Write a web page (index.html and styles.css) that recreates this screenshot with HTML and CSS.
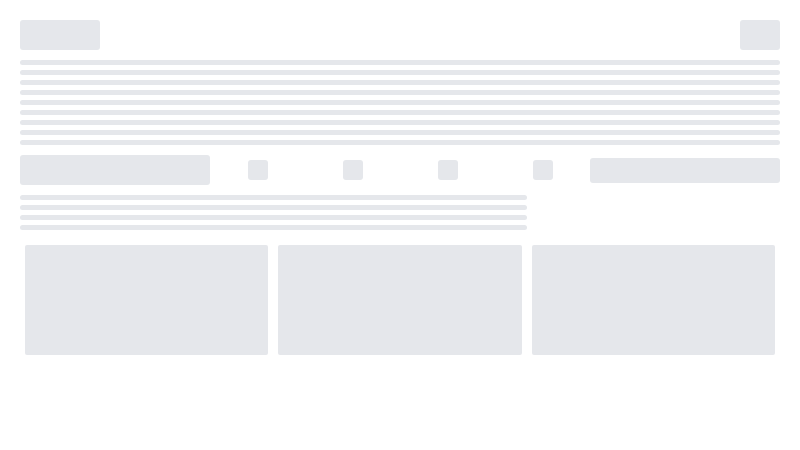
FILE: index.html
```html
<!DOCTYPE html>
<html lang="en">
<head>
<meta charset="utf-8">
<title>Loading</title>
<link rel="stylesheet" href="styles.css">
</head>
<body>
<div class="page">
  <div class="header">
    <div class="sk logo"></div>
    <div class="sk action"></div>
  </div>
  <div class="lines">
    <div class="sk line"></div>
    <div class="sk line"></div>
    <div class="sk line"></div>
    <div class="sk line"></div>
    <div class="sk line"></div>
    <div class="sk line"></div>
    <div class="sk line"></div>
    <div class="sk line"></div>
    <div class="sk line"></div>
  </div>
  <div class="toolbar">
    <div class="sk search"></div>
    <div class="icons">
      <div class="cell"><div class="sk icon"></div></div>
      <div class="cell"><div class="sk icon"></div></div>
      <div class="cell"><div class="sk icon"></div></div>
      <div class="cell"><div class="sk icon"></div></div>
    </div>
    <div class="sk field"></div>
  </div>
  <div class="lines short">
    <div class="sk line"></div>
    <div class="sk line"></div>
    <div class="sk line"></div>
    <div class="sk line"></div>
  </div>
  <div class="cards">
    <div class="sk card"></div>
    <div class="sk card"></div>
    <div class="sk card"></div>
  </div>
</div>
</body>
</html>
```
FILE: styles.css
```css
html, body {
  margin: 0;
  padding: 0;
  background: #ffffff;
  font-family: "Liberation Sans", Arial, sans-serif;
}
.page {
  padding: 20px;
  display: flex;
  flex-direction: column;
}
.sk {
  background: #e5e7eb;
  border-radius: 3px;
}
.header {
  display: flex;
  justify-content: space-between;
  height: 30px;
}
.logo { width: 80px; height: 30px; }
.action { width: 40px; height: 30px; }
.lines {
  display: flex;
  flex-direction: column;
  gap: 5px;
  margin-top: 10px;
}
.line {
  height: 5px;
  border-radius: 2.5px;
}
.lines.short {
  width: 507px;
  margin-top: 10px;
}
.toolbar {
  display: flex;
  align-items: center;
  height: 30px;
  margin-top: 10px;
}
.search { width: 190px; height: 30px; }
.icons {
  flex: 1;
  display: flex;
}
.cell {
  flex: 1;
  display: flex;
  justify-content: center;
}
.icon { width: 20px; height: 20px; }
.field { width: 190px; height: 25px; }
.cards {
  display: flex;
  gap: 10px;
  padding: 0 5px;
  margin-top: 15px;
}
.card {
  flex: 1;
  height: 110px;
  border-radius: 2px;
}
```
